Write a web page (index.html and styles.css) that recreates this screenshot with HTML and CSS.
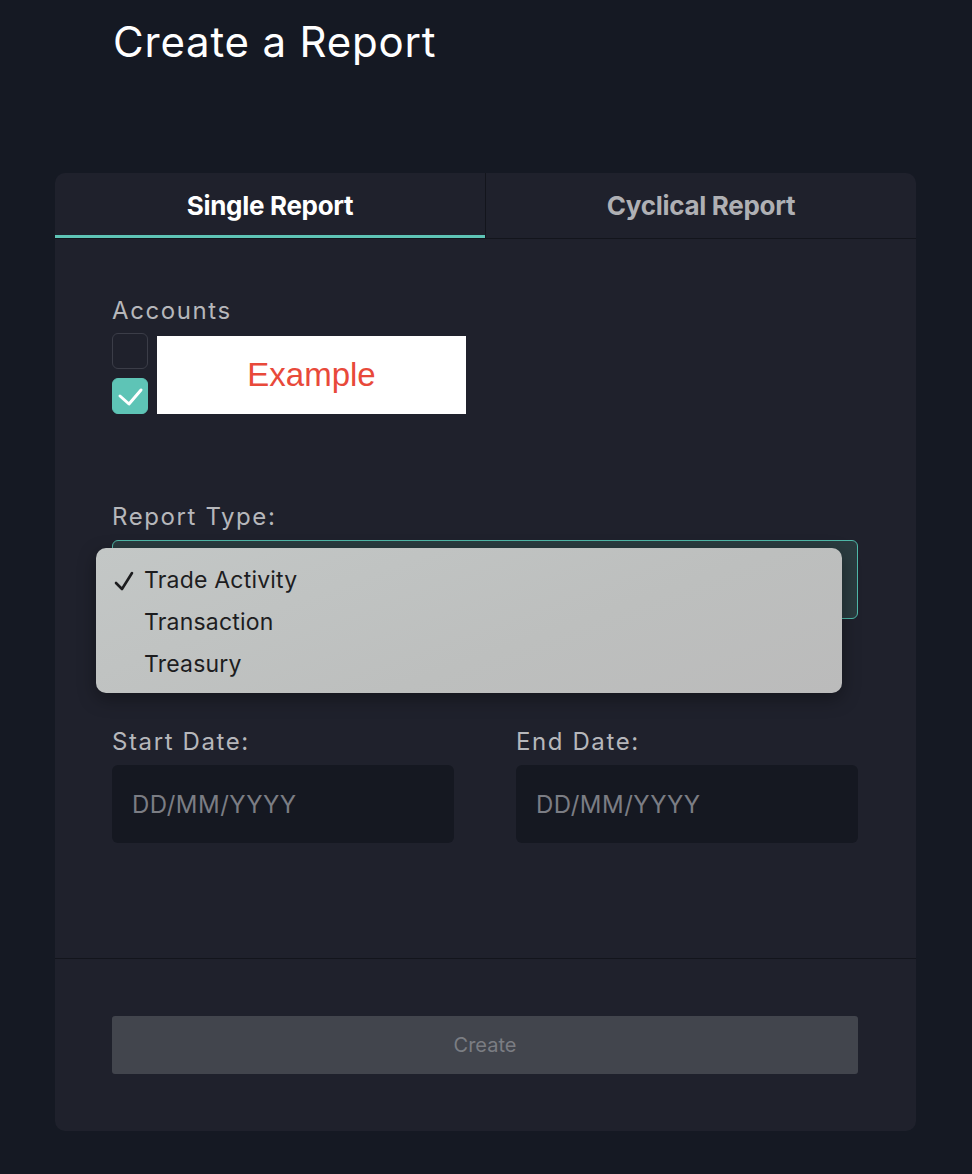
FILE: index.html
```html
<!DOCTYPE html>
<html lang="en">
<head>
<meta charset="utf-8">
<title>Create a Report</title>
<link rel="stylesheet" href="styles.css">
</head>
<body>
<h1 class="page-title">Create a Report</h1>
<div class="card">
  <div class="tabs">
    <div class="tab tab-active">Single Report</div>
    <div class="tab">Cyclical Report</div>
  </div>
  <div class="form">
    <div class="label">Accounts</div>
    <div class="accounts">
      <div class="checks">
        <span class="checkbox"></span>
        <span class="checkbox checkbox-on">
          <svg width="36" height="36" viewBox="0 0 36 36"><polyline points="8,18 17,26 29,12" fill="none" stroke="#ffffff" stroke-width="3" stroke-linecap="round" stroke-linejoin="round"/></svg>
        </span>
      </div>
      <div class="example">Example</div>
    </div>

    <div class="label label-type">Report Type:</div>
    <div class="select-wrap">
      <div class="select"></div>
      <div class="menu">
        <div class="menu-item">
          <svg class="menu-check" width="20" height="20" viewBox="0 0 20 20"><polyline points="2,12 8,18 18,2" fill="none" stroke="#1c1c1e" stroke-width="2.6" stroke-linecap="round" stroke-linejoin="round"/></svg>
          Trade Activity
        </div>
        <div class="menu-item">Transaction</div>
        <div class="menu-item">Treasury</div>
      </div>
    </div>

    <div class="dates">
      <div class="date-field">
        <div class="label">Start Date:</div>
        <div class="input">DD/MM/YYYY</div>
      </div>
      <div class="date-field">
        <div class="label">End Date:</div>
        <div class="input">DD/MM/YYYY</div>
      </div>
    </div>
  </div>
  <div class="footer">
    <button class="create-btn">Create</button>
  </div>
</div>
</body>
</html>
```

FILE: styles.css
```css
* { box-sizing: border-box; }
html, body { margin: 0; padding: 0; }
body {
  background: #151923;
  font-family: Inter, "Noto Sans", sans-serif;
  width: 972px;
  height: 1174px;
  overflow: hidden;
}
.page-title {
  margin: 0;
  padding: 17px 0 0 113px;
  font-size: 42px;
  line-height: 50px;
  font-weight: 400;
  color: #ffffff;
  letter-spacing: 0.8px;
}
.card {
  margin: 106px 0 0 55px;
  width: 861px;
  height: 958px;
  background: #1f212c;
  border-radius: 10px;
  overflow: hidden;
}
.tabs {
  display: flex;
  height: 66px;
  border-bottom: 1px solid #13151c;
}
.tab {
  flex: 1;
  display: flex;
  align-items: center;
  justify-content: center;
  font-size: 26px;
  font-weight: 700;
  color: #afb0b4;
  letter-spacing: -0.3px;
  padding-bottom: 1px;
}
.tab + .tab { border-left: 1px solid #13151c; }
.tab-active {
  color: #ffffff;
  box-shadow: inset 0 -3px 0 #5ec4b6;
}
.form {
  padding: 57px 58px 115px 57px;
  border-bottom: 1px solid #13151c;
}
.label {
  font-size: 24px;
  line-height: 30px;
  color: #b6b7bb;
  letter-spacing: 1.6px;
}
.accounts {
  display: flex;
  margin-top: 7px;
  gap: 9px;
}
.checks {
  display: flex;
  flex-direction: column;
  gap: 9px;
}
.checkbox {
  display: block;
  width: 36px;
  height: 36px;
  border: 1px solid #3b3d48;
  border-radius: 6px;
}
.checkbox-on {
  background: #5ec4b6;
  border-color: #5ec4b6;
}
.checkbox-on svg { display: block; margin: -1px; }
.example {
  margin-top: 3px;
  width: 309px;
  height: 78px;
  background: #ffffff;
  display: flex;
  align-items: center;
  justify-content: center;
  font-family: "Liberation Sans", Arial, sans-serif;
  font-size: 33px;
  color: #e8493a;
}
.label-type { margin-top: 88px; }
.select-wrap {
  position: relative;
  margin-top: 8px;
}
.select {
  height: 79px;
  border: 1px solid #4fb8a8;
  border-radius: 6px;
  background: #2a3b3f;
}
.menu {
  position: absolute;
  left: -16px;
  top: 8px;
  width: 746px;
  height: 145px;
  border-radius: 10px;
  background: linear-gradient(160deg, #c3c7c6 0%, #bdbfbe 60%, #bbbbbb 100%);
  box-shadow: 0 6px 18px rgba(0, 0, 0, 0.35);
  padding-top: 11px;
}
.menu-item {
  position: relative;
  height: 42px;
  line-height: 42px;
  padding-left: 48px;
  font-size: 23px;
  color: #1d1d1f;
  letter-spacing: 0.2px;
}
.menu-check {
  position: absolute;
  left: 18px;
  top: 12px;
}
.dates {
  display: flex;
  gap: 62px;
  margin-top: 108px;
}
.date-field { flex: 1; }
.date-field .label { margin-bottom: 8px; }
.input {
  height: 78px;
  background: #151821;
  border-radius: 6px;
  padding-left: 20px;
  display: flex;
  align-items: center;
  font-size: 24px;
  color: #7b7d84;
  letter-spacing: 0.5px;
}
.footer {
  padding: 57px 58px 0 57px;
}
.create-btn {
  display: block;
  width: 100%;
  height: 58px;
  border: none;
  border-radius: 3px;
  background: #42454d;
  color: #7b7d83;
  font-family: Inter, "Noto Sans", sans-serif;
  font-size: 20px;
  padding: 0;
}
```
